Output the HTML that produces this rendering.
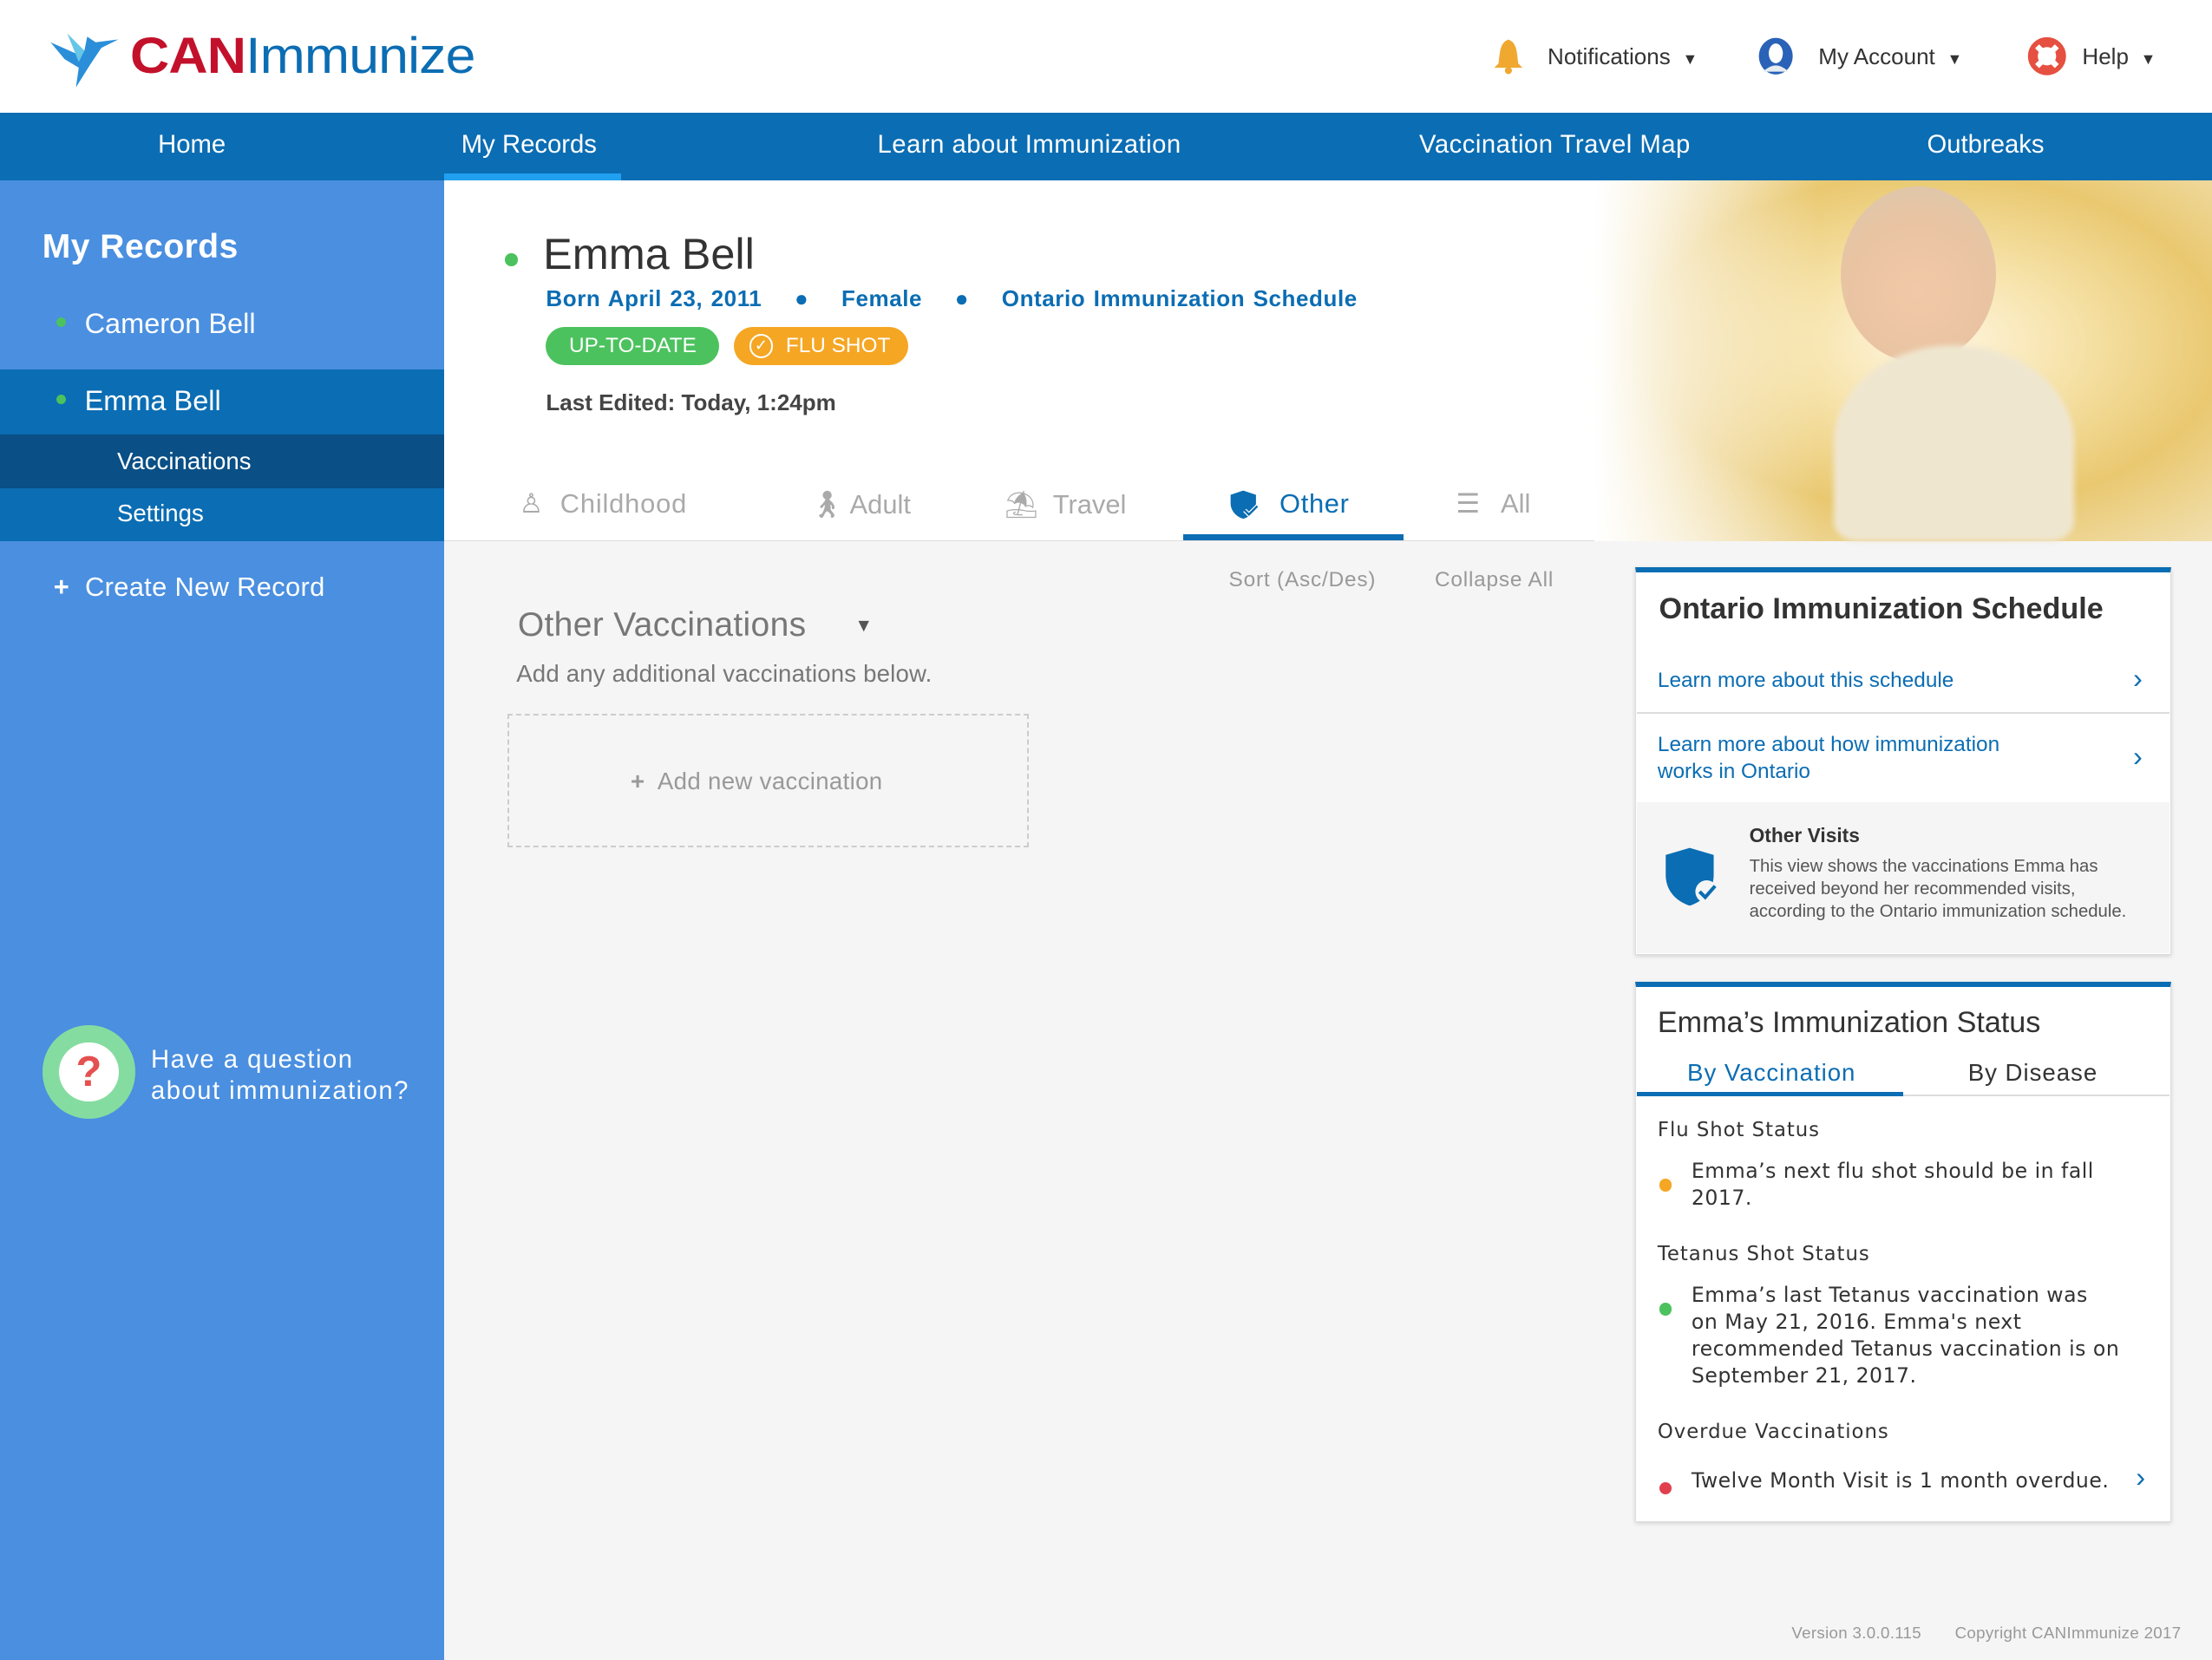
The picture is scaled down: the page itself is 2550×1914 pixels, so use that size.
<!DOCTYPE html>
<html><head><meta charset="utf-8"><style>
*{margin:0;padding:0;box-sizing:border-box}
html,body{width:2550px;height:1914px;overflow:hidden}
body{font-family:"Liberation Sans",sans-serif;background:#f5f5f5}
#w{zoom:1.6263;width:1568px;height:1177px;position:relative;overflow:hidden;background:#f5f5f5}
.a{position:absolute}
.hdr{left:0;top:0;width:1568px;height:80px;background:#fff}
.nav{left:0;top:80px;width:1568px;height:48px;background:#0b6db3;color:#fff;font-size:18px}
.nav span{position:absolute;top:13px}
.side{left:0;top:128px;width:315px;height:1049px;background:#4a8fe0;color:#fff}
.main{left:315px;top:128px;width:1253px;height:256px;background:#fff}
.dot{display:inline-block;width:7px;height:7px;border-radius:50%;background:#4cc25e}
.card{background:#fff;border:1px solid #ddd;border-top:4px solid #0b6db3;box-shadow:0 1px 3px rgba(0,0,0,.15)}
.blue{color:#0b6db3}
</style></head><body><div id="w">
<div class="a hdr"></div>
<svg class="a" style="left:34px;top:16px" width="52" height="48" viewBox="0 0 52 48"><path d="M2 14 L20 22 L14 8 L26 20 L28 10 L34 14 L50 12 L38 18 L30 30 L20 46 L22 32 L12 26 Z" fill="#2a8fd8"/><path d="M14 8 L26 20 L22 28 Z" fill="#66c6e8"/></svg>
<div class="a" style="left:92px;top:19px;font-size:36px;font-weight:bold;letter-spacing:-0.5px;transform:scaleX(1.07);transform-origin:left"><span style="color:#c3112b">CAN</span><span style="color:#0b6db3;font-weight:normal">Immunize</span></div>
<svg class="a" style="left:1058px;top:27px" width="22" height="26"><path d="M11 1 C5 3 5 10 4 18 L1 21 L21 21 L18 18 C17 10 17 3 11 1Z" fill="#f0a830"/><circle cx="11" cy="23" r="2.5" fill="#f0a830"/></svg>
<div class="a" style="left:1097px;top:31px;font-size:16px;color:#333">Notifications <span style="font-size:11px;margin-left:4px">▼</span></div>
<svg class="a" style="left:1246px;top:26px" width="26" height="28"><ellipse cx="13" cy="14" rx="12" ry="13" fill="#2a62b8"/><ellipse cx="13" cy="12" rx="5" ry="7" fill="#fff"/><path d="M4 25 Q13 16 22 25Z" fill="#e7ecf0"/></svg>
<div class="a" style="left:1289px;top:31px;font-size:16px;color:#333">My Account <span style="font-size:11px;margin-left:4px">▼</span></div>
<svg class="a" style="left:1437px;top:26px" width="28" height="28"><circle cx="14" cy="14" r="10" fill="none" stroke="#e55040" stroke-width="7"/><path d="M7 7 L10 10 M21 7 L18 10 M7 21 L10 18 M21 21 L18 18" stroke="#fff" stroke-width="4"/></svg>
<div class="a" style="left:1476px;top:31px;font-size:16px;color:#333">Help <span style="font-size:11px;margin-left:4px">▼</span></div>
<div class="a nav"><span style="left:112px">Home</span><span style="left:327px">My Records</span><span style="left:622px;letter-spacing:.3px">Learn about Immunization</span><span style="left:1006px;letter-spacing:.3px">Vaccination Travel Map</span><span style="left:1366px">Outbreaks</span></div>
<div class="a" style="left:315px;top:123px;width:125px;height:5px;background:#21a0f0"></div>
<div class="a side">
<div class="a" style="left:30px;top:34px;font-size:24px;font-weight:bold;letter-spacing:.3px">My Records</div>
<div class="a" style="left:40px;top:90px;font-size:20px"><span class="dot" style="margin-right:13px;vertical-align:4px"></span>Cameron Bell</div>
<div class="a" style="left:0;top:134px;width:315px;height:46px;background:#0b6db3"></div>
<div class="a" style="left:40px;top:145px;font-size:20px"><span class="dot" style="margin-right:13px;vertical-align:4px"></span>Emma Bell</div>
<div class="a" style="left:0;top:180px;width:315px;height:38px;background:#0a4f86"></div>
<div class="a" style="left:83px;top:189px;font-size:17px">Vaccinations</div>
<div class="a" style="left:0;top:218px;width:315px;height:38px;background:#0b6db3"></div>
<div class="a" style="left:83px;top:226px;font-size:17px">Settings</div>
<div class="a" style="left:38px;top:277px;font-size:19px;letter-spacing:.2px"><b>+</b>&nbsp; Create New Record</div>
<div class="a" style="left:30px;top:599px;width:66px;height:66px;border-radius:50%;background:#85dca0"></div>
<div class="a" style="left:42px;top:611px;width:42px;height:42px;border-radius:50%;background:#fff;color:#e55050;font-size:30px;font-weight:bold;text-align:center;line-height:42px">?</div>
<div class="a" style="left:107px;top:613px;font-size:18px;line-height:22px;letter-spacing:.9px">Have a question<br>about immunization?</div>
</div>
<div class="a main"></div>
<div class="a" style="left:1130px;top:128px;width:438px;height:256px;background:radial-gradient(ellipse at 55% 45%,#fff6e0 0,#f6e2a8 30%,#e9c870 60%,#f3e6c0 100%)"></div>
<div class="a" style="left:1130px;top:128px;width:160px;height:256px;background:linear-gradient(90deg,#fff,rgba(255,255,255,0))"></div>
<div class="a" style="left:1305px;top:132px;width:110px;height:125px;border-radius:50%;background:radial-gradient(circle at 50% 60%,#f2c9a8 0,#e9c4a2 55%,#d9c8b0 100%)"></div>
<div class="a" style="left:1300px;top:245px;width:170px;height:139px;border-radius:50% 50% 10% 10%;background:#efe6d0;filter:blur(2px)"></div>
<div class="a" style="left:358px;top:174px"><span class="dot" style="width:9px;height:9px"></span></div>
<div class="a" style="left:385px;top:162px;font-size:31px;color:#333">Emma Bell</div>
<div class="a blue" style="left:387px;top:202px;font-size:16px;font-weight:bold;letter-spacing:.35px;word-spacing:1px">Born April 23, 2011 &nbsp;&nbsp;&nbsp;●&nbsp;&nbsp;&nbsp; Female &nbsp;&nbsp;&nbsp;●&nbsp;&nbsp;&nbsp; Ontario Immunization Schedule</div>
<div class="a" style="left:387px;top:232px;width:123px;height:27px;border-radius:14px;background:#4cc25e;color:#fff;font-size:15px;text-align:center;line-height:27px">UP-TO-DATE</div>
<div class="a" style="left:520px;top:232px;width:124px;height:27px;border-radius:14px;background:#f5a623;color:#fff;font-size:15px;line-height:27px;padding-left:37px">FLU SHOT</div>
<div class="a" style="left:531px;top:237px;width:17px;height:17px;border:1.5px solid #fff;border-radius:50%;color:#fff;font-size:11px;text-align:center;line-height:14px">✓</div>
<div class="a" style="left:387px;top:276px;font-size:16px;font-weight:bold;color:#444">Last Edited: Today, 1:24pm</div>
<div class="a" style="left:315px;top:383px;width:815px;height:1px;background:#ddd"></div>
<div class="a" style="left:368px;top:346px;font-size:19px;color:#aaa;letter-spacing:.5px">♙&nbsp; Childhood</div>
<div class="a" style="left:574px;top:346px;font-size:19px;color:#aaa">🚶︎ Adult</div>
<div class="a" style="left:712px;top:346px;font-size:19px;color:#aaa">⛱︎&nbsp; Travel</div>
<svg class="a" style="left:871px;top:347px" width="22" height="22"><path d="M10 1 L19 4 L19 10 C19 16 14 20 10 21 C6 20 1 16 1 10 L1 4Z" fill="#0b6db3"/><path d="M11 15 L14 18 L20 12" stroke="#fff" stroke-width="3" fill="none"/><path d="M11 15 L14 18 L20 12" stroke="#0b6db3" stroke-width="1.5" fill="none"/></svg>
<div class="a blue" style="left:907px;top:346px;font-size:19px;letter-spacing:.4px">Other</div>
<div class="a" style="left:839px;top:379px;width:156px;height:4px;background:#0b6db3"></div>
<div class="a" style="left:1032px;top:346px;font-size:19px;color:#aaa">☰&nbsp;&nbsp; All</div>
<div class="a" style="left:871px;top:403px;font-size:15px;color:#999;letter-spacing:.5px">Sort (Asc/Des)</div>
<div class="a" style="left:1017px;top:403px;font-size:15px;color:#999;letter-spacing:.5px">Collapse All</div>
<div class="a" style="left:367px;top:430px;font-size:24px;color:#777;letter-spacing:.2px">Other Vaccinations &nbsp;&nbsp;&nbsp;&nbsp;<span style="font-size:13px;color:#555;vertical-align:3px">▼</span></div>
<div class="a" style="left:366px;top:468px;font-size:17px;color:#777;letter-spacing:.1px">Add any additional vaccinations below.</div>
<div class="a" style="left:360px;top:506px;width:369px;height:95px;border:1.5px dashed #ccc"></div>
<div class="a" style="left:447px;top:544px;font-size:17px;color:#999;letter-spacing:.2px"><b>+</b>&nbsp; Add new vaccination</div>
<div class="a card" style="left:1159px;top:402px;width:380px;height:275px"></div>
<div class="a" style="left:1176px;top:420px;font-size:21px;font-weight:bold;color:#333">Ontario Immunization Schedule</div>
<div class="a blue" style="left:1175px;top:474px;font-size:15px">Learn more about this schedule</div>
<div class="a blue" style="left:1512px;top:470px;font-size:20px">›</div>
<div class="a" style="left:1160px;top:505px;width:378px;height:1px;background:#ddd"></div>
<div class="a blue" style="left:1175px;top:519px;font-size:15px;line-height:19px">Learn more about how immunization<br>works in Ontario</div>
<div class="a blue" style="left:1512px;top:525px;font-size:20px">›</div>
<div class="a" style="left:1160px;top:569px;width:378px;height:107px;background:#f5f5f5"></div>
<svg class="a" style="left:1179px;top:600px" width="42" height="44"><path d="M19 1 L36 6 L36 20 C36 32 28 39 19 42 C10 39 2 32 2 20 L2 6Z" fill="#0b6db3"/><circle cx="31" cy="32" r="8" fill="#f5f5f5"/><path d="M26 32 L30 36 L37 28" stroke="#0b6db3" stroke-width="2.5" fill="none"/></svg>
<div class="a" style="left:1240px;top:584px;font-size:14px;font-weight:bold;color:#333">Other Visits</div>
<div class="a" style="left:1240px;top:606px;font-size:12.5px;line-height:16px;color:#555">This view shows the vaccinations Emma has<br>received beyond her recommended visits,<br>according to the Ontario immunization schedule.</div>
<div class="a card" style="left:1159px;top:696px;width:380px;height:383px"></div>
<div class="a" style="left:1175px;top:713px;font-size:21px;color:#333">Emma’s Immunization Status</div>
<div class="a blue" style="left:1196px;top:751px;font-size:17px;letter-spacing:.6px">By Vaccination</div>
<div class="a" style="left:1395px;top:751px;font-size:17px;color:#333;letter-spacing:.6px">By Disease</div>
<div class="a" style="left:1160px;top:776px;width:378px;height:1px;background:#ddd"></div>
<div class="a" style="left:1160px;top:774px;width:189px;height:3px;background:#0b6db3"></div>
<div class="a" style="left:1175px;top:793px;color:#333;letter-spacing:.6px;font-family:'DejaVu Sans',sans-serif;font-size:14px">Flu Shot Status</div>
<div class="a" style="left:1176px;top:830px"><span class="dot" style="background:#f5a623;width:9px;height:9px"></span></div>
<div class="a" style="left:1199px;top:821px;font-size:14.5px;line-height:19px;color:#333;font-family:'DejaVu Sans',sans-serif;letter-spacing:.3px">Emma’s next flu shot should be in fall<br>2017.</div>
<div class="a" style="left:1175px;top:881px;color:#333;font-family:'DejaVu Sans',sans-serif;font-size:14px;letter-spacing:.6px">Tetanus Shot Status</div>
<div class="a" style="left:1176px;top:918px"><span class="dot" style="width:9px;height:9px"></span></div>
<div class="a" style="left:1199px;top:909px;font-size:14.5px;line-height:19px;color:#333;font-family:'DejaVu Sans',sans-serif;letter-spacing:.3px">Emma’s last Tetanus vaccination was<br>on May 21, 2016. Emma's next<br>recommended Tetanus vaccination is on<br>September 21, 2017.</div>
<div class="a" style="left:1175px;top:1007px;color:#333;font-family:'DejaVu Sans',sans-serif;font-size:14px;letter-spacing:.6px">Overdue Vaccinations</div>
<div class="a" style="left:1176px;top:1045px"><span class="dot" style="background:#e0404e;width:9px;height:9px"></span></div>
<div class="a" style="left:1199px;top:1041px;font-size:14.5px;color:#333;font-family:'DejaVu Sans',sans-serif;letter-spacing:.3px">Twelve Month Visit is 1 month overdue.</div>
<div class="a blue" style="left:1514px;top:1036px;font-size:20px">›</div>
<div class="a" style="left:1270px;top:1151px;font-size:11.5px;color:#999;letter-spacing:.2px">Version 3.0.0.115 &nbsp;&nbsp;&nbsp;&nbsp;&nbsp; Copyright CANImmunize 2017</div>
</div></body></html>
